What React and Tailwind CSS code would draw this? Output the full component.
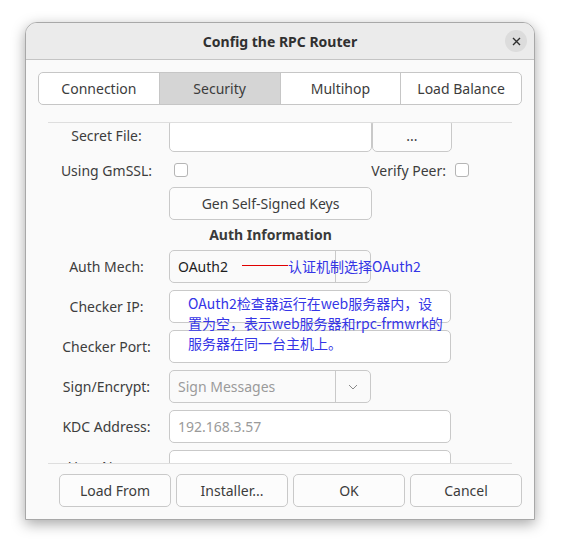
import React from "react";

const font = "font-['Noto_Sans','Noto_Sans_CJK_SC',sans-serif]";

function Label({ children }) {
  return (
    <div className="w-[117px] shrink-0 text-center text-[14px] text-[#3d3d3d]">{children}</div>
  );
}

function Input({ w = "w-[282px]", children, className = "" }) {
  return (
    <div
      className={`${w} h-[33px] rounded-[5px] border border-[#c9c9c9] bg-white flex items-center px-[8px] text-[14px] ${className}`}
    >
      {children}
    </div>
  );
}

function Combo({ text, textClass, chevron }) {
  return (
    <div className="w-[202px] h-[33px] rounded-[5px] border border-[#c9c9c9] bg-[#fafafa] flex items-center text-[14px]">
      <div className={`flex-1 px-[8px] ${textClass}`}>{text}</div>
      <div className="w-[35px] h-full border-l border-[#c9c9c9] flex items-center justify-center">
        {chevron && (
          <svg width="10" height="6" viewBox="0 0 10 6">
            <path d="M1 1 L5 5 L9 1" fill="none" stroke="#8a8a8a" strokeWidth="1" />
          </svg>
        )}
      </div>
    </div>
  );
}

function Checkbox() {
  return <div className="w-[14px] h-[14px] rounded-[3px] border border-[#b5b5b5] bg-white" />;
}

function Button({ children, className = "" }) {
  return (
    <div
      className={`h-[33px] rounded-[5px] border border-[#c9c9c9] bg-[#fcfcfc] flex items-center justify-center text-[14px] text-[#3c3c3c] ${className}`}
    >
      {children}
    </div>
  );
}

export default function App() {
  return (
    <div className={`w-[561px] h-[549px] bg-white overflow-hidden ${font}`}>
      <div className="ml-[25px] mt-[22px] w-[510px] h-[498px] rounded-t-[12px] bg-[#fafafa] border border-[#a8a8a8] shadow-[0_4px_14px_rgba(0,0,0,0.35)] flex flex-col overflow-hidden">
        {/* Title bar */}
        <div className="h-[37px] shrink-0 bg-[#ebebeb] border-b border-[#c4c4c4] flex items-center relative">
          <div className="flex-1 text-center text-[14px] font-bold text-[#303030]">Config the RPC Router</div>
          <div className="absolute right-[7px] top-[7px] w-[22px] h-[22px] rounded-full bg-[#dcdcdc] flex items-center justify-center">
            <svg width="9" height="9" viewBox="0 0 9 9">
              <path d="M1 1 L8 8 M8 1 L1 8" stroke="#2e2e2e" strokeWidth="1.4" />
            </svg>
          </div>
        </div>

        {/* Body */}
        <div className="flex-1 flex flex-col pt-[12px]">
          {/* Tabs */}
          <div className="mx-[12px] h-[33px] flex rounded-[5px] border border-[#c6c6c6] overflow-hidden text-[14px] text-[#3c3c3c] bg-white">
            <div className="flex-1 flex items-center justify-center">Connection</div>
            <div className="flex-1 flex items-center justify-center bg-[#d5d5d5] border-l border-[#c6c6c6]">Security</div>
            <div className="flex-1 flex items-center justify-center border-l border-[#c6c6c6]">Multihop</div>
            <div className="flex-1 flex items-center justify-center border-l border-[#c6c6c6]">Load Balance</div>
          </div>

          {/* Scroll region */}
          <div className="mt-[17px] mx-[22px] h-[342px] border-y border-[#dedede] overflow-hidden relative">
            <div className="-mt-[4px] flex flex-col">
              {/* Secret File */}
              <div className="h-[33px] flex items-center">
                <Label>Secret File:</Label>
                <div className="ml-[4px] flex">
                  <Input w="w-[203px]" />
                  <Button className="w-[80px]">...</Button>
                </div>
              </div>
              {/* GmSSL */}
              <div className="mt-[4px] h-[28px] flex items-center">
                <Label>Using GmSSL:</Label>
                <div className="ml-[9px]"><Checkbox /></div>
                <div className="flex-1" />
                <div className="text-[14px] text-[#3d3d3d]">Verify Peer:</div>
                <div className="ml-[9px] mr-[43px]"><Checkbox /></div>
              </div>
              {/* Gen keys */}
              <div className="mt-[3px] h-[32px] flex">
                <div className="w-[121px] shrink-0" />
                <Button className="w-[203px]">Gen Self-Signed Keys</Button>
              </div>
              {/* Auth info */}
              <div className="h-[31px] flex items-center">
                <div className="w-[121px] shrink-0" />
                <div className="w-[203px] text-center text-[14px] font-bold text-[#3a3a3a]">Auth Information</div>
              </div>
              {/* Auth Mech */}
              <div className="h-[33px] flex items-center">
                <Label>Auth Mech:</Label>
                <div className="ml-[4px]">
                  <Combo text="OAuth2" textClass="text-[#1e1e1e]" />
                </div>
              </div>
              <div className="mt-[7px] h-[33px] flex items-center">
                <Label>Checker IP:</Label>
                <div className="ml-[4px]"><Input /></div>
              </div>
              <div className="mt-[7px] h-[33px] flex items-center">
                <Label>Checker Port:</Label>
                <div className="ml-[4px]"><Input /></div>
              </div>
              <div className="mt-[7px] h-[33px] flex items-center">
                <Label>Sign/Encrypt:</Label>
                <div className="ml-[4px]">
                  <Combo text="Sign Messages" textClass="text-[#9a9a9a]" chevron />
                </div>
              </div>
              <div className="mt-[7px] h-[33px] flex items-center">
                <Label>KDC Address:</Label>
                <div className="ml-[4px]">
                  <Input><span className="text-[#9a9a9a]">192.168.3.57</span></Input>
                </div>
              </div>
              <div className="mt-[7px] h-[33px] flex items-center">
                <Label>User Name:</Label>
                <div className="ml-[4px]"><Input /></div>
              </div>
            </div>

            {/* Annotations */}
            <div className="absolute left-[194px] top-[142px] w-[46px] h-[1px] bg-[#e00000]" />
            <div className="absolute left-[240px] top-[133px] text-[14px] leading-[20px] text-[#3535e6] font-['Noto_Sans_CJK_SC',sans-serif] whitespace-nowrap">
              认证机制选择OAuth2
            </div>
            <div className="absolute left-[140px] top-[170px] text-[14px] leading-[20px] text-[#3535e6] font-['Noto_Sans_CJK_SC',sans-serif] whitespace-nowrap">
              <div>OAuth2检查器运行在web服务器内，设</div>
              <div>置为空，表示web服务器和rpc-frmwrk的</div>
              <div>服务器在同一台主机上。</div>
            </div>
          </div>

          {/* Buttons */}
          <div className="mt-[10px] flex justify-end gap-[5px] pr-[12px]">
            <Button className="w-[112px]">Load From</Button>
            <Button className="w-[112px]">Installer...</Button>
            <Button className="w-[112px]">OK</Button>
            <Button className="w-[112px]">Cancel</Button>
          </div>
        </div>
      </div>
    </div>
  );
}
